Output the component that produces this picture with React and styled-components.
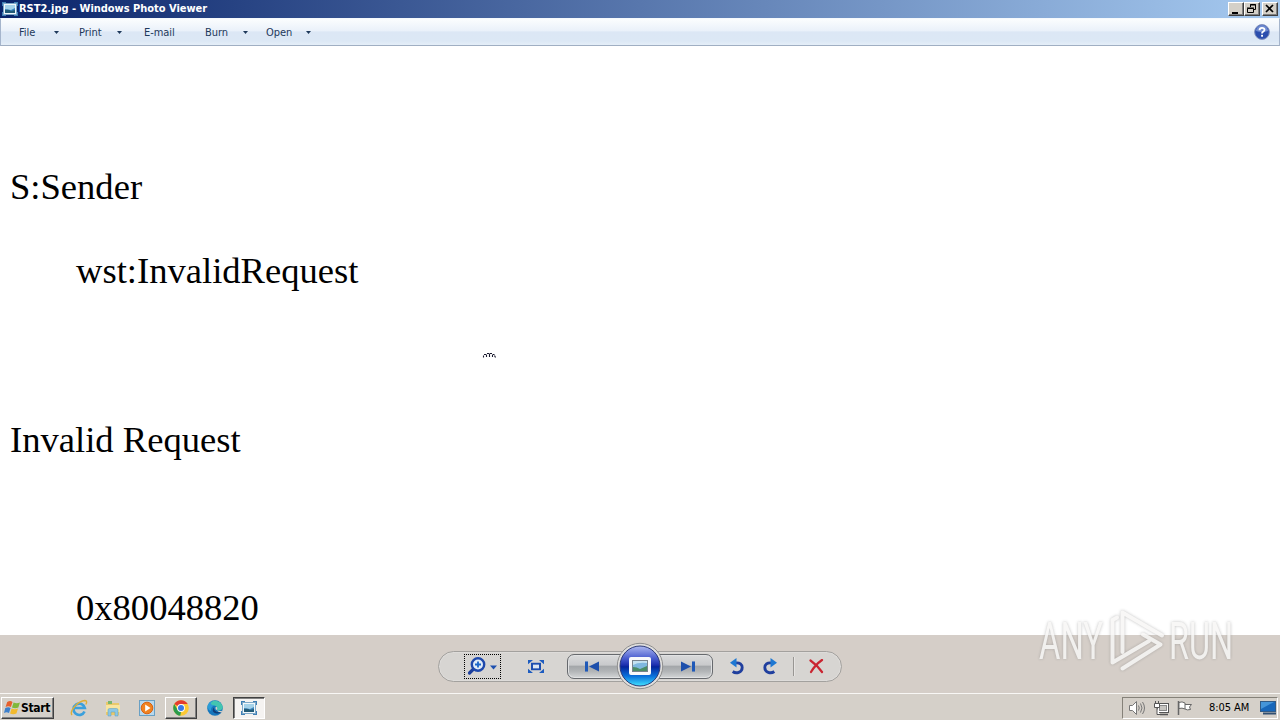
import React from 'react';
import styled, { createGlobalStyle } from 'styled-components';

  //STYLED COMPONENTS
  const GlobalStyle = createGlobalStyle`
    * { box-sizing: border-box; }
    body {
      margin: 0;
      overflow: hidden;
      background: #fff;
      font-family: 'DejaVu Sans Condensed', 'DejaVu Sans', sans-serif;
    }
    svg { display: block; flex: none; }
  `;

  const Desktop = styled.div`
    position: relative;
    width: 1280px;
    height: 720px;
    display: flex;
    flex-direction: column;
    overflow: hidden;
  `;

  const TitleBar = styled.div`
    height: 18px;
    flex: none;
    display: flex;
    align-items: center;
    padding: 0 2px;
    background: linear-gradient(90deg, #0a246a, #a6caf0);
  `;

  const Title = styled.span`
    flex: 1;
    margin-left: 1px;
    color: #fff;
    font: bold 11px/18px 'DejaVu Sans Condensed', 'DejaVu Sans', sans-serif;
    font-stretch: condensed;
    letter-spacing: -0.02px;
    white-space: nowrap;
  `;

  const WindowButton = styled.button`
    width: 16px;
    height: 14px;
    padding: 0;
    margin-left: ${({ $gap }) => $gap || 0}px;
    border: 1px solid;
    border-color: #fff #404040 #404040 #fff;
    box-shadow: inset -1px -1px #808080;
    background: #d4d0c8;
  `;

  const MenuBar = styled.div`
    height: 28px;
    flex: none;
    display: flex;
    align-items: center;
    padding: 0 9px 0 18px;
    border: 1px solid #a5b5cc;
    border-top-color: #f5f9fd;
    border-bottom-color: #a0afc3;
    background: linear-gradient(#fbfdfe 0%, #eaf1fa 45%, #dce7f5 50%, #dce8f5 85%, #e5eef8 100%);
  `;

  const MenuItem = styled.div`
    width: ${({ $width }) => $width}px;
    display: flex;
    align-items: center;
    color: #1e395b;
    font: 11px/16px 'DejaVu Sans Condensed', 'DejaVu Sans', sans-serif;
    font-stretch: condensed;
    letter-spacing: ${({ $spacing }) => $spacing}px;
  `;

  const MenuLabel = styled.span`
    width: ${({ $width }) => $width}px;
    padding-top: 2px;
    white-space: nowrap;
  `;

  const HelpSlot = styled.div`
    margin: -1px 0 0 auto;
  `;

  const PhotoArea = styled.main`
    height: 589px;
    flex: none;
    padding: 119px 10px 0;
    background: #fff;
    overflow: hidden;
  `;

  const PhotoLine = styled.p`
    height: 84.3px;
    margin: 0;
    padding-left: ${({ $indent }) => ($indent ? 66 : 0)}px;
    color: #000;
    font: 36.6px/44px 'Liberation Serif', 'Times New Roman', serif;
    white-space: pre;
  `;

  const ControlBar = styled.div`
    height: 58px;
    flex: none;
    display: flex;
    justify-content: center;
    padding-top: 16px;
    background: #d5cec8;
  `;

  const Pill = styled.div`
    width: 404px;
    height: 31px;
    display: flex;
    align-items: center;
    padding: 0 24px 0 25px;
    border: 1px solid #a3a19e;
    border-radius: 16px;
    background: #d7d5d2;
    box-shadow: inset 0 0 0 1px #dedcda;
  `;

  const ZoomButton = styled.button`
    width: 37px;
    height: 25px;
    padding: 0;
    border: 1px dotted #000;
    background: none;
  `;

  const Tool = styled.div`
    margin-left: ${({ $gap }) => $gap}px;
  `;

  const NavGroup = styled.div`
    position: relative;
    display: flex;
    margin-left: 23px;
  `;

  const NavButton = styled.button`
    width: 73px;
    height: 25px;
    display: flex;
    align-items: center;
    justify-content: ${({ $next }) => ($next ? 'flex-end' : 'flex-start')};
    padding: 0 16px;
    border: 1px solid #66696d;
    border-radius: ${({ $next }) => ($next ? '0 7px 7px 0' : '7px 0 0 7px')};
    background: linear-gradient(#d9dadb 0%, #c9cacc 43%, #a4a7aa 50%, #b1b4b6 70%, #d4d6d7 100%);
    box-shadow: inset 0 0 0 1px #e1e2e3;
  `;

  const SlideShow = styled.div`
    position: absolute;
    left: 49px;
    top: -12px;
  `;

  const Divider = styled.div`
    width: 2px;
    height: 19px;
    margin-left: 15px;
    border-left: 1px solid #989693;
    border-right: 1px solid #e6e4e2;
  `;

  const TaskBar = styled.div`
    height: 27px;
    flex: none;
    display: flex;
    align-items: center;
    padding: 1px 2px 0 1px;
    border-top: 1px solid #f8f7f5;
    background: #d5d0c9;
  `;

  const StartButton = styled.button`
    width: 53px;
    height: 22px;
    display: flex;
    align-items: center;
    padding: 0 0 0 2px;
    border: 1px solid;
    border-color: #fff #404040 #404040 #fff;
    box-shadow: inset -1px -1px #808080;
    background: #d5d0c9;
    color: #000;
    font: bold 12px/16px 'DejaVu Sans Condensed', 'DejaVu Sans', sans-serif;
    font-stretch: condensed;
    letter-spacing: -0.3px;
  `;

  const Tasks = styled.div`
    display: flex;
    margin-left: 9px;
  `;

  const Task = styled.div`
    width: ${({ $width }) => $width || 32}px;
    height: 22px;
    margin-right: 2px;
    display: flex;
    align-items: center;
    justify-content: center;
    border: 1px solid;
    border-color: ${({ $state }) => {
      if ($state === 'open') return '#fff #404040 #404040 #fff';
      if ($state === 'active') return '#404040 #fff #fff #404040';
      return 'transparent';
    }};
    box-shadow: ${({ $state }) => ($state === 'open' ? 'inset -1px -1px #808080' : $state === 'active' ? 'inset 1px 1px #808080' : 'none')};
    background: ${({ $state }) => ($state === 'active' ? '#f5f3f1' : 'transparent')};
  `;

  const Tray = styled.div`
    width: 156px;
    height: 22px;
    display: flex;
    align-items: center;
    margin-left: auto;
    padding: 0 1px 0 5px;
    border: 1px solid;
    border-color: #858179 #fff #fff #858179;
  `;

  const TrayIcon = styled.div`
    margin-right: ${({ $gap }) => $gap}px;
  `;

  const Clock = styled.span`
    width: 51px;
    color: #000;
    font: 11px/16px 'DejaVu Sans Condensed', 'DejaVu Sans', sans-serif;
    font-stretch: condensed;
    letter-spacing: -0.05px;
    white-space: nowrap;
  `;

  const Overlay = styled.div`
    position: absolute;
    left: ${({ $x }) => $x}px;
    top: ${({ $y }) => $y}px;
    pointer-events: none;
  `;
  //END of styled components

const ViewerIcon = ({ size = 16 }) => (
  <svg width={size} height={size} viewBox='0 0 16 16'>
    <path d='M0 1h4v2H2v2H0zM12 1h4v4h-2V3h-2zM0 11h2v2h2v2H0zM14 11h2v4h-4v-2h2z' fill='#3f7fb5' />
    <rect x='1.5' y='2.5' width='13' height='11' fill='#f1f7fa' stroke='#7fa9c8' />
    <rect x='3' y='4' width='10' height='8' fill='#3c84bd' />
    <path d='M3 4h10v3l-4 2-6-1z' fill='#a5d2e9' />
    <path d='M3 12V9q4-1 6 1l4-1v3z' fill='#225b77' />
  </svg>
);

const Arrow = () => (
  <svg width='5' height='3' viewBox='0 0 5 3'><path d='M0 0h5L2.5 3z' fill='#1e395b' /></svg>
);

const HelpIcon = () => (
  <svg width='16' height='16' viewBox='0 0 16 16'>
    <circle cx='8' cy='8' r='7.4' fill='#2b4eae' stroke='#8493bd' />
    <path d='M2 7a6 6 0 0 1 12 0q-6 2-12 0z' fill='#6f8bd0' />
    <path d='M5.500 6.200Q5.600 3.800 8 3.800t2.500 2Q10.500 7 9 7.800 8 8.400 8 9.600' fill='none' stroke='#fff' strokeWidth='1.8' />
    <rect x='7.1' y='10.8' width='1.9' height='1.9' fill='#fff' />
  </svg>
);

const ZoomIcon = () => (
  <svg width='35' height='23' viewBox='0 0 35 23'>
    <path d='M9 13.500L4.500 18' stroke='#1d3f9c' strokeWidth='3.2' strokeLinecap='round' />
    <circle cx='13' cy='9.500' r='6.200' fill='#e1ecf8' stroke='#1f49ac' strokeWidth='2.4' />
    <path d='M10 9.500h6M13 6.500v6' stroke='#1c67c9' strokeWidth='1.800' />
    <path d='M25 10.500h7l-3.500 4z' fill='#1d50af' />
  </svg>
);

const FitIcon = () => (
  <svg width='16' height='13' viewBox='0 0 16 14' preserveAspectRatio='none'>
    <path d='M0 0h5L0 4.500zM16 0h-5l5 4.500zM0 14h5L0 9.500zM16 14h-5l5-4.500z' fill='#1d5cc0' />
    <rect x='4' y='4' width='8' height='6' fill='#dbe6f2' stroke='#1c4eb0' strokeWidth='2' />
  </svg>
);

const SkipIcon = ({ next }) => (
  <svg width='15' height='11' viewBox='0 0 15 12' preserveAspectRatio='none'>
    <g transform={next ? 'translate(15 0) scale(-1 1)' : undefined}>
      <rect x='1' y='.5' width='3' height='11' fill='#1f59b8' />
      <path d='M15 .500v11L5 6z' fill='#1c4fac' />
    </g>
  </svg>
);

const SlideShowIcon = () => (
  <svg width='48' height='48' viewBox='0 0 48 48'>
    <defs>
      <linearGradient id='orb' x1='0' y1='0' x2='0' y2='1'>
        <stop offset='0' stopColor='#aeb9f0' />
        <stop offset='.3' stopColor='#4c5fd0' />
        <stop offset='.48' stopColor='#1b2fae' />
        <stop offset='.52' stopColor='#06259b' />
        <stop offset='.75' stopColor='#0870db' />
        <stop offset='1' stopColor='#42e3ff' />
      </linearGradient>
    </defs>
    <circle cx='24' cy='24' r='22.700' fill='#e0dfdd' stroke='#8e8e8e' />
    <circle cx='24' cy='24' r='20' fill='url(#orb)' stroke='#2d3b78' />
    <rect x='13' y='15' width='22' height='18' rx='2' fill='#f8f9fb' />
    <rect x='16.500' y='18.500' width='15' height='11' fill='#7fb8df' stroke='#78838c' />
    <path d='M17 23q5-3 14-2v-2H17z' fill='#c4e2f1' />
    <path d='M17 29V25q4 0 7 2l7-3v5z' fill='#4a8c65' />
  </svg>
);

const RotateIcon = ({ right }) => (
  <svg width='16' height='17' viewBox='0 0 16 17'>
    <g transform={right ? 'translate(16 0) scale(-1 1)' : undefined}>
      <path d='M6 5C11 4 13.200 7 13.200 9.500c0 5-6 6.500-9.500 4' fill='none' stroke='#203f9e' strokeWidth='2.800' />
      <path d='M1 4.700L7.500 0v9.500z' fill='#1e78d2' />
    </g>
  </svg>
);

const DeleteIcon = () => (
  <svg width='15' height='15' viewBox='0 0 15 15'>
    <path d='M1.500 1.500Q8 6 13 13M13 1Q6 6 2 13' stroke='#ca2430' strokeWidth='2.200' strokeLinecap='round' fill='none' />
  </svg>
);

const StartIcon = () => (
  <svg width='17' height='16' viewBox='0 0 16 16' preserveAspectRatio='none'>
    <path d='M3 2q3-2 5 0L6.500 7Q4 5.500 1.500 7z' fill='#e6602d' />
    <path d='M9 2.500q3 1.500 6 0L13.500 7.500q-3 1.500-6 0z' fill='#80b83b' />
    <path d='M1.200 8q3-1.500 5 0L4.700 13Q2.500 11.500 0 13z' fill='#3d80cc' />
    <path d='M7.200 8.500q3 1.500 6 0L11.700 13.500q-3 1.500-6 0z' fill='#f3ba2d' />
  </svg>
);

const ExplorerIcon = () => (
  <svg width='18' height='18' viewBox='0 0 18 18'>
    <path d='M14.500 12.500A5.700 5.700 0 1 1 14.800 9H5' fill='none' stroke='#3ba0dc' strokeWidth='2.700' />
    <path d='M2 16C-1 12 8 2 15 1.500c2 0 2 2 .8 4' fill='none' stroke='#dfae35' strokeWidth='1.400' />
  </svg>
);

const FolderIcon = () => (
  <svg width='18' height='18' viewBox='0 0 18 18'>
    <path d='M2 3h5l1 1h7v12H2z' fill='#e9c86b' />
    <path d='M4 2h4v3H4z' fill='#7ab66d' />
    <path d='M2 6h14v7H2z' fill='#f8e59f' />
    <path d='M4 17v-6q0-1.500 1.500-1.500h7Q14 9.500 14 11v6h-3v-4H7v4z' fill='#8cc7e5' stroke='#5b9dbd' strokeWidth='.5' />
  </svg>
);

const MediaIcon = () => (
  <svg width='18' height='18' viewBox='0 0 18 18'>
    <rect x='1.500' y='1.500' width='15' height='15' fill='#b9d8ec' stroke='#69a0c4' />
    <circle cx='9' cy='9' r='5.800' fill='#f08220' stroke='#d96212' />
    <path d='M7.200 5.500v7L12.500 9z' fill='#fff' />
  </svg>
);

const ChromeIcon = () => (
  <svg width='16' height='16' viewBox='0 0 16 16'>
    <circle cx='8' cy='8' r='7.800' fill='#fcc934' />
    <path d='M8 8L1.250 4.100A7.800 7.800 0 0 1 14.750 4.100H8z' fill='#e33b2e' />
    <path d='M1.250 4.100L4.700 10 8 11.500l-.7 4.300A7.800 7.800 0 0 1 1.250 4.100z' fill='#2b9b4b' />
    <circle cx='8' cy='8' r='3.900' fill='#fff' />
    <circle cx='8' cy='8' r='3' fill='#3979e6' />
  </svg>
);

const EdgeIcon = () => (
  <svg width='16' height='16' viewBox='0 0 16 16'>
    <circle cx='8' cy='8' r='7.800' fill='#1676bc' />
    <path d='M.5 7C2-1.500 14-1.500 15.800 7c.2 3-3 4-6 3 1.500-2.500-.5-4.500-3-4.500C3.500 5.500 1 7 .500 8z' fill='#43c5b0' />
    <path d='M.5 7Q1 2 6 .5 1 5 8 5.500 3.500 6 4 11 1 10 .5 7z' fill='#2c9bd8' />
    <path d='M6.500 7.500q-2.500 5 3 6 3 .300 5-1.500-5 1-7-2z' fill='#113e78' />
    <path d='M9.800 10q1.200-1.200.2-2.800-1-.8-1.500.300-.500 2 1.300 2.500zM10 10.200q3 1.500 5.500.300l-1 1.700q-3 .5-4.500-2z' fill='#d5d0c9' />
  </svg>
);

const SpeakerIcon = () => (
  <svg width='18' height='16' viewBox='0 0 18 16' fill='none' stroke='#777'>
    <path d='M1.500 5.500h3l4-4v13l-4-4h-3z' fill='#fff' />
    <path d='M10.500 5.500q1.500 2.500 0 5M12.500 3.500q3 4.500 0 9M14.500 2q4 6 0 12' />
  </svg>
);

const NetworkIcon = () => (
  <svg width='16' height='16' viewBox='0 0 16 16' fill='none' stroke='#555'>
    <rect x='4.500' y='3.500' width='11' height='9' fill='#fff' />
    <rect x='6.500' y='5.500' width='7' height='5' fill='#c7c5c1' stroke='#888' />
    <path d='M7 14.500h8' strokeWidth='1.500' />
    <path d='M1.500 3.500h5v4h-5zM2.500 1v3M5.500 1v3M4 8v6.500h3' fill='#fff' />
  </svg>
);

const FlagIcon = () => (
  <svg width='17' height='16' viewBox='0 0 17 16' fill='#fff' stroke='#666'>
    <path d='M2.500 1v14' strokeWidth='1.500' />
    <path d='M3 2.500q3-1.500 6 .500v6q-3-1.500-6-.5zM9 4.500h6.500l-2 2.500 1 2.500Q11 10.500 9 9' />
  </svg>
);

const DesktopIcon = () => (
  <svg width='16' height='14' viewBox='0 0 16 14'>
    <rect x='.5' y='.5' width='15' height='10' fill='#1867ba' stroke='#315b87' />
    <path d='M1 1h13L1 8z' fill='#4595d9' />
    <path d='M3 12.500h13' stroke='#314f70' strokeWidth='2' />
  </svg>
);

// closed-hand pointer, only the knuckles show on white
const HandCursor = () => (
  <svg width='14' height='6' viewBox='0 0 14 6'>
    <path d='M1.500 5.500V3.500M2 2.500h2M4.500 5V2.500M5 1.500h2.500M7.500 5V2M8 1.500h2M10.500 5V2.500M11 2.500h1.500M12.500 3.500l1 2' fill='none' stroke='#18182c' strokeWidth='1.100' />
  </svg>
);

const Watermark = () => (
  <svg width='236' height='76' viewBox='1032 602 236 76' opacity='.85'>
    <g style={{ filter: 'drop-shadow(0 0 1.500px #77777788)' }}>
      <g fill='#f7f6f5' fontFamily='Roboto, sans-serif' fontSize='51' fontWeight='400'>
        <text x='1039' y='659' textLength='64' lengthAdjust='spacingAndGlyphs'>ANY</text>
        <text x='1169' y='659' textLength='64' lengthAdjust='spacingAndGlyphs'>RUN</text>
      </g>
      <g fill='none' stroke='#f7f6f5' strokeWidth='4' strokeLinejoin='round' strokeLinecap='round'>
        <path d='M1117 617.500L1112.500 620V662.500L1149 641' />
        <path d='M1122.500 652V612.500L1162 635.500' />
        <path d='M1143 634.500L1160.500 644.500 1122.500 668.500' />
      </g>
    </g>
  </svg>
);

const menus = [
  { name: 'File', width: 60, label: 35, arrow: true },
  { name: 'Print', width: 65, label: 38, arrow: true },
  { name: 'E-mail', width: 61, label: 40, arrow: false },
  { name: 'Burn', width: 61, label: 38, arrow: true },
  { name: 'Open', width: 60, label: 40, arrow: true }
];

const photoLines = [
  { text: 'S:Sender' },
  { text: 'wst:InvalidRequest', indent: true },
  { text: '' },
  { text: 'Invalid Request' },
  { text: '' },
  { text: '0x80048820', indent: true }
];

const App = () => {
  return (
    <Desktop>
      <GlobalStyle />
      <TitleBar>
        <ViewerIcon />
        <Title>RST2.jpg - Windows Photo Viewer</Title>
        <WindowButton>
          <svg width='14' height='12'><path d='M3 9h6v2H3z' /></svg>
        </WindowButton>
        <WindowButton>
          <svg width='14' height='12' fill='none' stroke='#000'><path d='M5.500 4V1.500h5v5H9M5 2h6M2.500 5.500h6v4h-6zM2 5h7' /></svg>
        </WindowButton>
        <WindowButton $gap={2}>
          <svg width='14' height='12'><path d='M3 2l7 7M10 2L3 9' stroke='#000' strokeWidth='1.700' /></svg>
        </WindowButton>
      </TitleBar>

      <MenuBar>
        {menus.map(({ name, width, label, arrow }) => (
          <MenuItem key={name} $width={width} $spacing={-0.05}>
            <MenuLabel $width={label}>{name}</MenuLabel>
            {arrow && <Arrow />}
          </MenuItem>
        ))}
        <HelpSlot><HelpIcon /></HelpSlot>
      </MenuBar>

      <PhotoArea>
        {photoLines.map(({ text, indent }, i) => (
          <PhotoLine key={i} $indent={indent}>{text}</PhotoLine>
        ))}
      </PhotoArea>

      <ControlBar>
        <Pill>
          <ZoomButton><ZoomIcon /></ZoomButton>
          <Tool $gap={27}><FitIcon /></Tool>
          <NavGroup>
            <NavButton><SkipIcon /></NavButton>
            <NavButton $next><SkipIcon next /></NavButton>
            <SlideShow><SlideShowIcon /></SlideShow>
          </NavGroup>
          <Tool $gap={16}><RotateIcon /></Tool>
          <Tool $gap={17}><RotateIcon right /></Tool>
          <Divider />
          <Tool $gap={14}><DeleteIcon /></Tool>
        </Pill>
      </ControlBar>

      <TaskBar>
        <StartButton><StartIcon />Start</StartButton>
        <Tasks>
          <Task><ExplorerIcon /></Task>
          <Task><FolderIcon /></Task>
          <Task><MediaIcon /></Task>
          <Task $state='open'><ChromeIcon /></Task>
          <Task><EdgeIcon /></Task>
          <Task $state='active'><ViewerIcon /></Task>
        </Tasks>
        <Tray>
          <TrayIcon $gap={7}><SpeakerIcon /></TrayIcon>
          <TrayIcon $gap={7}><NetworkIcon /></TrayIcon>
          <TrayIcon $gap={16}><FlagIcon /></TrayIcon>
          <Clock>8:05 AM</Clock>
          <DesktopIcon />
        </Tray>
      </TaskBar>

      <Overlay $x={482} $y={352}><HandCursor /></Overlay>
      <Overlay $x={1032} $y={602}><Watermark /></Overlay>
    </Desktop>
  );
};

export default App;
